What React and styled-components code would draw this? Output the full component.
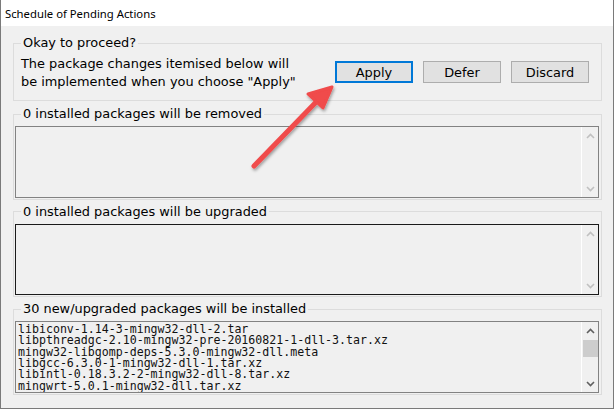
import React from 'react';
import styled, { createGlobalStyle } from 'styled-components';

const GlobalStyle = createGlobalStyle`
  html, body {
    margin: 0;
    padding: 0;
    background: #ffffff;
  }
  * { box-sizing: border-box; }
`;

const Window = styled.div`
  position: relative;
  width: 614px;
  height: 409px;
  border: 1px solid #7a7a7a;
  border-top: none;
  display: flex;
  flex-direction: column;
  font-family: "DejaVu Sans", Verdana, sans-serif;
  font-size: 12.9px;
  color: #000;
  overflow: hidden;
`;

const TitleBar = styled.div`
  height: 26px;
  flex: none;
  background: #ffffff;
  display: flex;
  align-items: center;
  padding-left: 4px;
  font-family: "Noto Sans", "Liberation Sans", sans-serif;
  font-size: 11.3px;
  color: #000;
`;

const Body = styled.div`
  flex: 1;
  background: #f0f0f0;
  padding: 9px 11px 13px 12px;
  display: flex;
  flex-direction: column;
  gap: 4px;
`;

const Group = styled.fieldset`
  margin: 0 0 ${p => (p.$list ? '0' : '1px')};
  padding: 0 ${p => (p.$list ? '2px' : '12px')} 1px ${p => (p.$list ? '1px' : '7px')};
  border: 1px solid #dcdcdc;
  min-width: 0;
  flex: ${p => (p.$grow ? '1' : 'none')};
  display: flex;
  flex-direction: column;
`;

const Legend = styled.legend`
  margin-left: ${p => (p.$list ? '6px' : '0')};
  padding: 0 2px;
  line-height: 16px;
  font-size: 12.9px;
`;

const ProceedRow = styled.div`
  display: flex;
  align-items: flex-start;
  justify-content: space-between;
  height: 48px;
`;

const Message = styled.div`
  line-height: 18px;
  padding-top: 4px;
  white-space: nowrap;
`;

const Buttons = styled.div`
  display: flex;
  gap: 10px;
  padding-top: 10px;
`;

const Button = styled.button`
  width: 78px;
  height: 22px;
  margin: 0;
  padding: 0;
  font-family: inherit;
  font-size: 12.9px;
  color: #000;
  background: #e1e1e1;
  border: ${p => (p.$default ? '2px solid #0078d7' : '1px solid #adadad')};
  cursor: pointer;
`;

const ListBox = styled.div`
  flex: 1;
  margin-top: 4px;
  border: 1px solid ${p => (p.$focused ? '#1a1a1a' : '#828282')};
  background: #f0f0f0;
  display: flex;
  min-height: 0;
`;

const ListText = styled.div`
  flex: 1;
  padding: 2px 0 0 2px;
  font-family: "DejaVu Sans Mono", "Liberation Mono", monospace;
  font-size: 11.6px;
  line-height: 11.33px;
  color: #111;
  white-space: pre;
  overflow: hidden;
`;

const ScrollBar = styled.div`
  width: 17px;
  flex: none;
  border-left: 1px solid #ffffff;
  display: flex;
  flex-direction: column;
  align-items: center;
  justify-content: space-between;
  padding: 6px 0 5px;
`;

const Thumb = styled.div`
  width: 15px;
  height: 17px;
  background: #cdcdcd;
  margin-left: 1px;
`;

const ThumbTrack = styled.div`
  flex: 1;
  width: 100%;
  padding-top: 6px;
`;

const Chevron = ({ down, enabled }) => (
  <svg width="9" height="6" viewBox="0 0 9 6">
    <polyline
      points={down ? '1,1 4.5,4.5 8,1' : '1,5 4.5,1.5 8,5'}
      fill="none"
      stroke={enabled ? '#606060' : '#c0c0c0'}
      strokeWidth="1.6"
    />
  </svg>
);

const Scroll = ({ enabled }) => (
  <ScrollBar>
    <Chevron enabled={enabled} />
    {enabled && (
      <ThumbTrack>
        <Thumb />
      </ThumbTrack>
    )}
    <Chevron down enabled={enabled} />
  </ScrollBar>
);

const ArrowLayer = styled.svg`
  position: absolute;
  left: 0;
  top: 0;
  pointer-events: none;
`;

const installed = [
  'libiconv-1.14-3-mingw32-dll-2.tar',
  'libpthreadgc-2.10-mingw32-pre-20160821-1-dll-3.tar.xz',
  'mingw32-libgomp-deps-5.3.0-mingw32-dll.meta',
  'libgcc-6.3.0-1-mingw32-dll-1.tar.xz',
  'libintl-0.18.3.2-2-mingw32-dll-8.tar.xz',
  'mingwrt-5.0.1-mingw32-dll.tar.xz',
];

export default function App() {
  return (
    <>
      <GlobalStyle />
      <Window>
        <TitleBar>Schedule of Pending Actions</TitleBar>
        <Body>
          <Group>
            <Legend>Okay to proceed?</Legend>
            <ProceedRow>
              <Message>
                The package changes itemised below will
                <br />
                be implemented when you choose "Apply"
              </Message>
              <Buttons>
                <Button $default>Apply</Button>
                <Button>Defer</Button>
                <Button>Discard</Button>
              </Buttons>
            </ProceedRow>
          </Group>

          <Group $list $grow>
            <Legend $list>0 installed packages will be removed</Legend>
            <ListBox>
              <ListText />
              <Scroll />
            </ListBox>
          </Group>

          <Group $list $grow>
            <Legend $list>0 installed packages will be upgraded</Legend>
            <ListBox $focused>
              <ListText />
              <Scroll />
            </ListBox>
          </Group>

          <Group $list $grow>
            <Legend $list>30 new/upgraded packages will be installed</Legend>
            <ListBox>
              <ListText>{installed.join('\n')}</ListText>
              <Scroll enabled />
            </ListBox>
          </Group>
        </Body>

        <ArrowLayer width="614" height="409" viewBox="0 0 614 409">
          <defs>
            <filter id="shadow" x="-20%" y="-20%" width="140%" height="140%">
              <feDropShadow dx="1" dy="2" stdDeviation="1.5" floodColor="#000" floodOpacity="0.35" />
            </filter>
          </defs>
          <g filter="url(#shadow)" fill="#f04b4b" stroke="#f04b4b" strokeLinecap="round" strokeLinejoin="round">
            <line x1="253" y1="166" x2="320" y2="97" strokeWidth="5" />
            <polygon points="331,87 307,94 322,108" strokeWidth="3" />
          </g>
        </ArrowLayer>
      </Window>
    </>
  );
}
